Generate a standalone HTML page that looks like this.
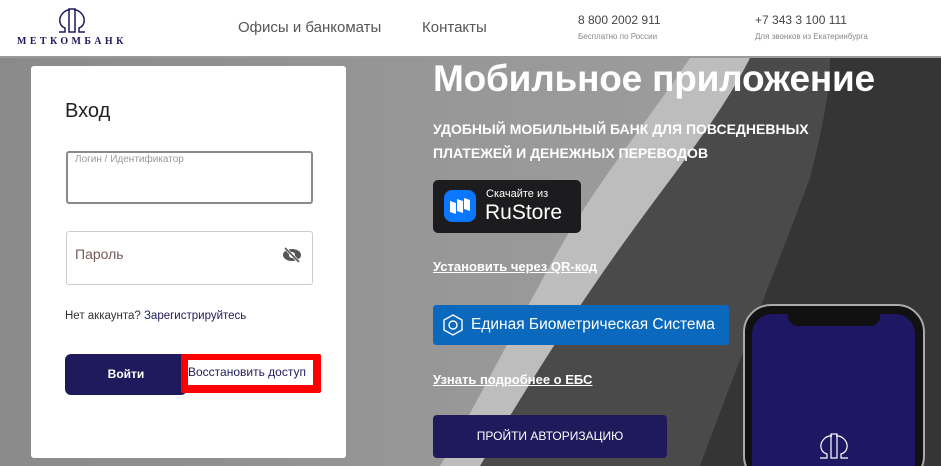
<!DOCTYPE html>
<html><head><meta charset="utf-8"><style>
*{margin:0;padding:0;box-sizing:border-box}
html,body{width:941px;height:466px;overflow:hidden}
body{font-family:"Liberation Sans","DejaVu Sans",sans-serif;position:relative;background:#888}
.hdr{position:absolute;left:0;top:0;width:941px;height:58px;background:#fff;border-bottom:2px solid #9a9a9a;z-index:3}
.abs{position:absolute}
.clip{position:absolute;left:0;top:0;width:941px;height:466px;overflow:hidden}
.bg{position:absolute;left:0;top:58px;width:941px;height:408px}
.card{position:absolute;left:31px;top:66px;width:315px;height:392px;background:#fff;border-radius:3px}
.w{color:#fff}
u{text-decoration:underline}
</style></head><body><div class="clip">
<svg class="bg" width="941" height="408" viewBox="0 0 941 408">
<defs><linearGradient id="g" x1="0" y1="0" x2="1" y2="0">
<stop offset="0" stop-color="#8a8a8a"/><stop offset="0.5" stop-color="#989898"/><stop offset="1" stop-color="#a0a0a0"/></linearGradient></defs>
<rect width="941" height="408" fill="url(#g)"/>
<path d="M690 0 L941 0 L941 408 L440 408 C480 340 520 260 560 190 C600 120 650 60 690 0Z" fill="#bdbdbd"/>
<path d="M750 0 L941 0 L941 408 L480 408 C520 340 570 260 620 190 C670 120 720 60 750 0Z" fill="#4a4a4a"/>
<path d="M830 0 L941 0 L941 408 L700 408 C740 300 780 200 810 120 C825 60 830 30 830 0Z" fill="#353535"/>
</svg>
<div class="hdr">
<svg class="abs" style="left:55px;top:6px" width="34" height="28" viewBox="0 0 34 28" fill="none" stroke="#1f1a5c" stroke-width="1.5">
<path d="M4 26 L10 26 L10 22 C4 20 3 12 8 7 C12 3 15 4 15 4 M30 26 L24 26 L24 22 C30 20 31 12 26 7 C22 3 19 4 19 4"/><rect x="14" y="3" width="6" height="23"/></svg>
<div class="abs" style="left:17px;top:36px;font-family:'Liberation Serif',serif;font-weight:bold;font-size:10px;letter-spacing:3.4px;color:#1f1a5c">МЕТКОМБАНК</div>
<div class="abs" style="left:238px;top:19px;font-size:15px;color:#555">Офисы и банкоматы</div>
<div class="abs" style="left:422px;top:19px;font-size:15px;color:#555">Контакты</div>
<div class="abs" style="left:578px;top:13px;font-size:12px;color:#444">8 800 2002 911</div>
<div class="abs" style="left:578px;top:32px;font-size:8px;color:#888">Бесплатно по России</div>
<div class="abs" style="left:755px;top:13px;font-size:12px;color:#444">+7 343 3 100 111</div>
<div class="abs" style="left:755px;top:32px;font-size:8px;color:#888">Для звонков из Екатеринбурга</div>
</div>
<div class="card"></div>
<div class="abs" style="left:65px;top:100px;font-size:20px;color:#222">Вход</div>
<div class="abs" style="left:66px;top:151px;width:247px;height:53px;border:2px solid #8a8a8a;border-radius:3px;background:#fff"></div>
<div class="abs" style="left:75px;top:154px;font-size:10px;color:#999">Логин / Идентификатор</div>
<div class="abs" style="left:66px;top:231px;width:247px;height:54px;border:1px solid #ccc;border-radius:3px;background:#fff"></div>
<div class="abs" style="left:75px;top:246px;font-size:14px;color:#7a5a5a">Пароль</div>
<svg class="abs" style="left:282px;top:247px" width="20" height="16" viewBox="0 0 20 16"><ellipse cx="10" cy="8" rx="9" ry="6" fill="#555"/><circle cx="10" cy="8" r="3" fill="#fff"/><path d="M3 1 L17 15" stroke="#fff" stroke-width="3"/><path d="M3 1 L17 15" stroke="#555" stroke-width="1.6"/></svg>
<div class="abs" style="left:65px;top:310px;font-size:11.5px;color:#333">Нет аккаунта? <span style="color:#1f1a5c">Зарегистрируйтесь</span></div>
<div class="abs" style="left:65px;top:354px;width:122px;height:41px;background:#1f1a5c;border-radius:6px;color:#fff;font-size:12px;font-weight:bold;text-align:center;line-height:41px">Войти</div>
<div class="abs" style="left:181px;top:354px;width:140px;height:39px;background:#f00;border-radius:2px"></div>
<div class="abs" style="left:188px;top:360px;width:125px;height:25px;background:#fff;font-size:12px;color:#1f1a5c;line-height:25px;white-space:nowrap;overflow:hidden">Восстановить доступ</div>

<div class="abs w" style="left:433px;top:58px;font-size:37px;font-weight:bold;letter-spacing:-0.2px">Мобильное приложение</div>
<div class="abs w" style="left:433px;top:117px;font-size:14px;font-weight:bold;line-height:24px">УДОБНЫЙ МОБИЛЬНЫЙ БАНК ДЛЯ ПОВСЕДНЕВНЫХ<br>ПЛАТЕЖЕЙ И ДЕНЕЖНЫХ ПЕРЕВОДОВ</div>
<div class="abs" style="left:433px;top:180px;width:148px;height:53px;background:#1c1c1e;border-radius:5px"></div>
<div class="abs" style="left:444px;top:190px;width:32px;height:32px;background:#0a77ff;border-radius:8px"></div>
<svg class="abs" style="left:449px;top:197px" width="22" height="18" viewBox="0 0 22 18" fill="#fff"><path d="M1 4 L7 6 L7 17 L1 15Z M8 2 L14 4 L14 16 L8 14Z M15 1 L21 3 L21 14 L15 12Z"/></svg>
<div class="abs w" style="left:486px;top:188px;font-size:11px">Скачайте из</div>
<div class="abs w" style="left:485px;top:201px;font-size:21px">RuStore</div>
<div class="abs w" style="left:433px;top:259px;font-size:13px;font-weight:bold"><u>Установить через QR-код</u></div>
<div class="abs" style="left:433px;top:305px;width:296px;height:40px;background:#0b69bd;border-radius:3px"></div>
<svg class="abs" style="left:443px;top:314px" width="20" height="22" viewBox="0 0 20 22" fill="none" stroke="#fff" stroke-width="1.4"><path d="M10 1 L19 6 L19 16 L10 21 L1 16 L1 6Z"/><circle cx="10" cy="11" r="4"/></svg>
<div class="abs w" style="left:471px;top:316px;font-size:15.5px">Единая Биометрическая Система</div>
<div class="abs w" style="left:433px;top:372px;font-size:13px;font-weight:bold"><u>Узнать подробнее о ЕБС</u></div>
<div class="abs" style="left:433px;top:415px;width:234px;height:43px;background:#1f1a5c;border-radius:4px;color:#fff;font-size:12px;text-align:center;line-height:43px">ПРОЙТИ АВТОРИЗАЦИЮ</div>

<div class="abs" style="left:743px;top:304px;width:182px;height:180px;background:#111;border:2px solid #aaa;border-radius:28px"></div>
<div class="abs" style="left:752px;top:314px;width:163px;height:170px;background:#1e1763;border-radius:20px"></div>
<div class="abs" style="left:788px;top:312px;width:92px;height:14px;background:#111;border-radius:0 0 10px 10px"></div>
<svg class="abs" style="left:816px;top:432px" width="36" height="28" viewBox="0 0 36 28" fill="none" stroke="#fff" stroke-width="1.2"><path d="M4 26 L11 26 L11 22 C4 20 3 12 8 7 C12 3 16 4 16 4 M32 26 L25 26 L25 22 C32 20 33 12 28 7 C24 3 20 4 20 4"/><rect x="15" y="2" width="6" height="24"/></svg>
</div></body></html>
